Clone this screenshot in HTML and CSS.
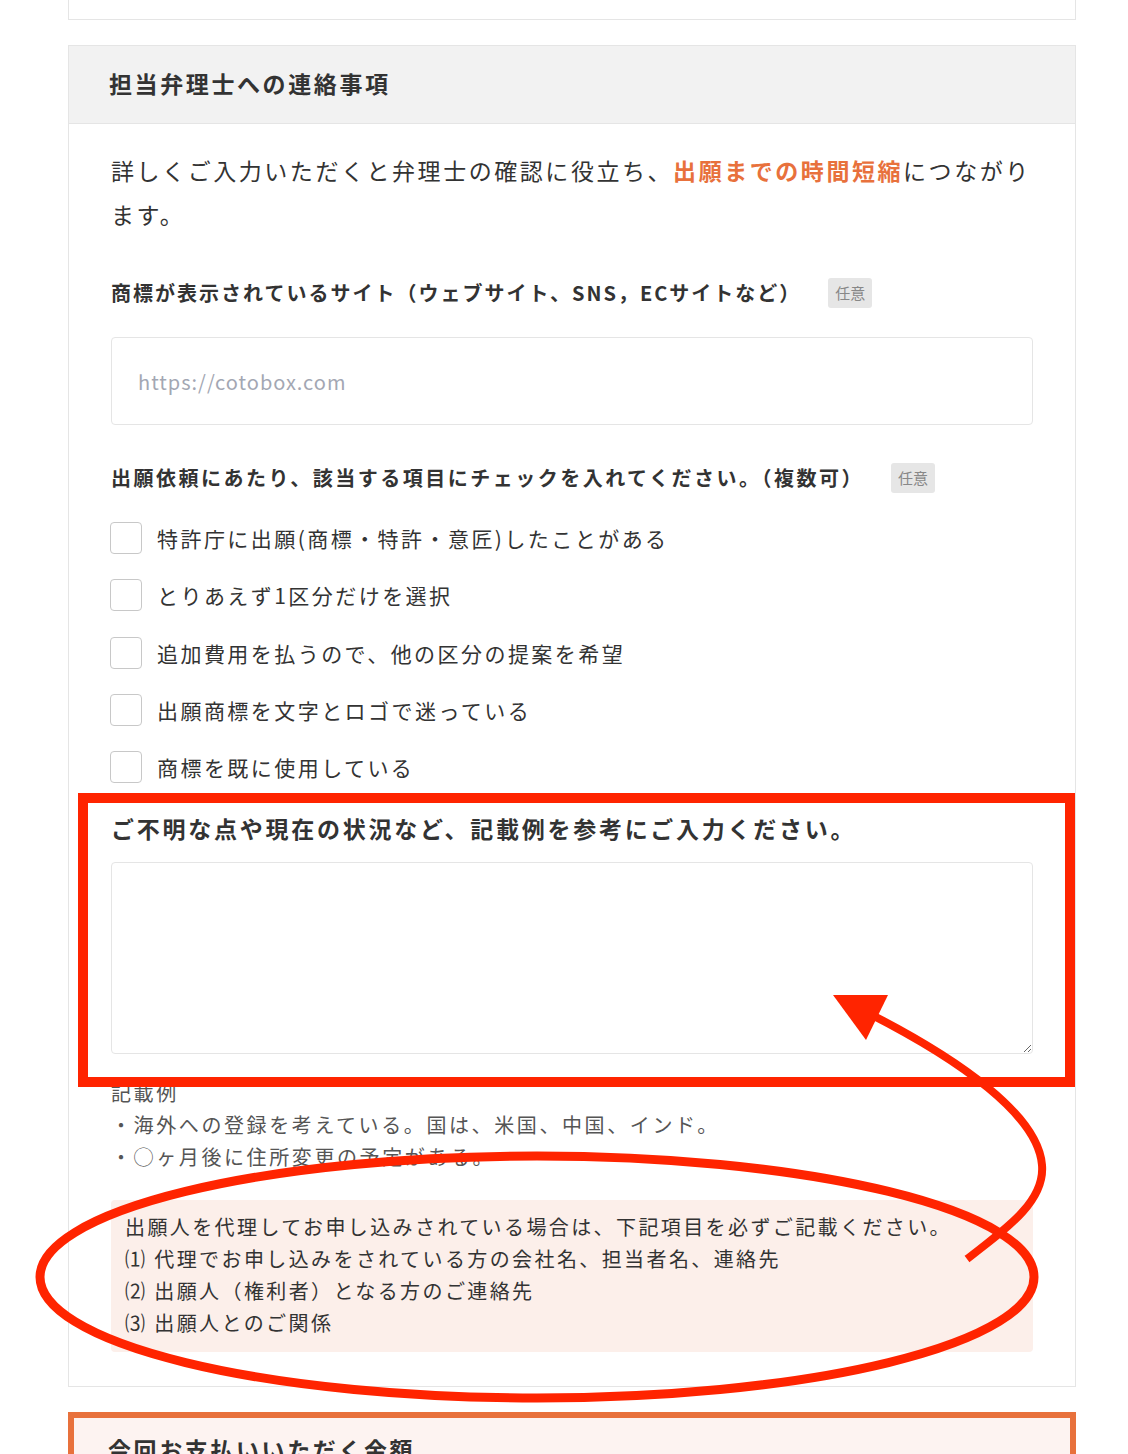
FILE: index.html
```html
<html>
<head>
    <link rel="stylesheet" href="styles.css">
</head>
<body>
    <div id="page">
        <div class="card prev"></div>

        <div class="card">
            <div class="card-head">担当弁理士への連絡事項</div>
            <div class="card-body">
                <p class="intro">詳しくご入力いただくと弁理士の確認に役立ち、<strong>出願までの時間短縮</strong>につながります。</p>

                <div class="label label-site">商標が表示されているサイト（ウェブサイト、SNS，ECサイトなど）<span class="badge">任意</span></div>
                <input class="text-input" type="text" placeholder="https://cotobox.com" />

                <div class="label label-check">出願依頼にあたり、該当する項目にチェックを入れてください。（複数可）<span class="badge">任意</span></div>
                <div class="checks">
                    <label class="check"><span class="box"></span>特許庁に出願(商標・特許・意匠)したことがある</label>
                    <label class="check"><span class="box"></span>とりあえず1区分だけを選択</label>
                    <label class="check"><span class="box"></span>追加費用を払うので、他の区分の提案を希望</label>
                    <label class="check"><span class="box"></span>出願商標を文字とロゴで迷っている</label>
                    <label class="check"><span class="box"></span>商標を既に使用している</label>
                </div>

                <div class="label label-note">ご不明な点や現在の状況など、記載例を参考にご入力ください。</div>
                <textarea class="note"></textarea>

                <div class="example">
                    <div>記載例</div>
                    <div>・海外への登録を考えている。国は、米国、中国、インド。</div>
                    <div>・◯ヶ月後に住所変更の予定がある。</div>
                </div>

                <div class="proxy">
                    <div>出願人を代理してお申し込みされている場合は、下記項目を必ずご記載ください。</div>
                    <div>⑴ 代理でお申し込みをされている方の会社名、担当者名、連絡先</div>
                    <div>⑵ 出願人（権利者）となる方のご連絡先</div>
                    <div>⑶ 出願人とのご関係</div>
                </div>
            </div>
        </div>

        <div class="card total">
            <div class="total-head">今回お支払いいただく金額</div>
        </div>
    </div>

    <!-- red annotations drawn over the form -->
    <svg class="marks" width="1128" height="1454" viewBox="0 0 1128 1454">
        <rect x="83" y="798" width="987" height="284" fill="none" stroke="#ff2400" stroke-width="10" />
        <ellipse cx="537" cy="1277" rx="497" ry="121" fill="none" stroke="#ff2400" stroke-width="9" />
        <path d="M967 1259 C1010 1226 1045 1200 1042 1165 C1038 1115 960 1060 870 1014" fill="none" stroke="#ff2400" stroke-width="8" />
        <polygon points="833,995 888,995 866,1040" fill="#ff2400" />
    </svg>
</body>
</html>
```

FILE: styles.css
```css
body {
    margin: 0;
    position: relative;
    background-color: #ffffff;
    font-family: "Noto Sans CJK JP", sans-serif;
    color: #333333;
}

#page {
    width: 1008px;
    margin-left: 68px;
    padding-bottom: 60px;
}

.card {
    box-sizing: border-box;
    border: 1px solid #e5e5e5;
    background-color: #ffffff;
    margin-bottom: 25px;
}

.prev {
    height: 20px;
    border-top: none;
}

.card-head {
    height: 78px;
    box-sizing: border-box;
    padding: 21px 40px 0;
    background-color: #f2f2f2;
    border-bottom: 1px solid #e5e5e5;
    font-size: 23px;
    line-height: 32px;
    font-weight: bold;
    letter-spacing: 2.6px;
    color: #333333;
}

.card-body {
    padding: 24px 42px 34px;
}

.intro {
    margin: 0;
    font-size: 23px;
    line-height: 44px;
    letter-spacing: 2.55px;
}

.intro strong {
    color: #e8713c;
}

.label {
    display: flex;
    align-items: center;
    font-size: 20px;
    line-height: 32px;
    font-weight: bold;
    letter-spacing: 2.5px;
}

.label-site {
    margin-top: 41px;
    letter-spacing: 2px;
}

.label-check {
    margin-top: 37px;
}

.label-note {
    margin-top: 29px;
    font-size: 23px;
    letter-spacing: 2.75px;
}

.badge {
    margin-left: 27px;
    width: 44px;
    height: 30px;
    line-height: 30px;
    text-align: center;
    border-radius: 3px;
    background-color: #e6e6e6;
    color: #888888;
    font-size: 15px;
    font-weight: normal;
    letter-spacing: 0;
}

.text-input {
    display: block;
    box-sizing: border-box;
    width: 100%;
    height: 88px;
    margin-top: 28px;
    padding: 0 26px;
    border: 1px solid #e5e5e5;
    border-radius: 4px;
    font-family: "Noto Sans CJK JP", sans-serif;
    font-size: 20px;
    letter-spacing: 1px;
    color: #333333;
    outline: none;
}

.text-input::placeholder {
    color: #a3a7b3;
}

.checks {
    margin-top: 28px;
    display: flex;
    flex-direction: column;
    gap: 25.3px;
}

.check {
    display: flex;
    align-items: center;
    height: 32px;
    margin-left: -1px;
    font-size: 21px;
    letter-spacing: 2.45px;
    color: #333333;
}

.box {
    box-sizing: border-box;
    width: 32px;
    height: 32px;
    margin-right: 15px;
    border: 1px solid #c8c8c8;
    border-radius: 4px;
    background-color: #ffffff;
}

.note {
    display: block;
    box-sizing: border-box;
    width: 100%;
    height: 192px;
    margin-top: 18px;
    border: 1px solid #e5e5e5;
    border-radius: 4px;
    font-family: "Noto Sans CJK JP", sans-serif;
    font-size: 20px;
    outline: none;
}

.example {
    margin-top: 23px;
    font-size: 20px;
    line-height: 32px;
    letter-spacing: 2.6px;
    color: #555555;
}

.proxy {
    margin-top: 27px;
    padding: 11px 14px 13px;
    border-radius: 4px;
    background-color: #fcefea;
    font-size: 20px;
    line-height: 32px;
    letter-spacing: 2.4px;
    color: #333333;
}

.total {
    border: 6px solid #e8713c;
    background-color: #fdf3f1;
    height: 120px;
}

.total-head {
    padding: 15px 34px 0;
    font-size: 23px;
    line-height: 32px;
    font-weight: bold;
    letter-spacing: 2.6px;
}

.marks {
    position: absolute;
    top: 0;
    left: 0;
    pointer-events: none;
}
```
